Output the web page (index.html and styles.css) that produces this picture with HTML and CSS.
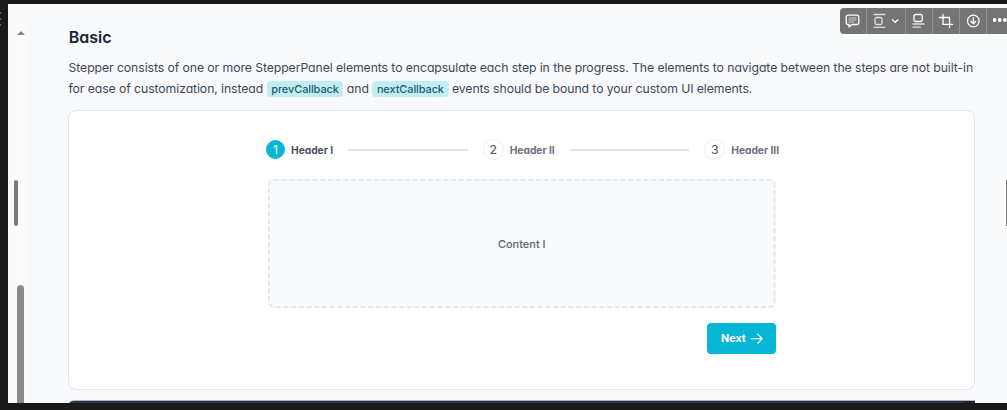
FILE: index.html
```html
<!DOCTYPE html>
<html lang="en">
<head>
<meta charset="utf-8">
<title>Stepper</title>
<link rel="stylesheet" href="styles.css">
</head>
<body>
<div class="page">
  <div class="scrollbar"><span class="scroll-up"></span><span class="scroll-thumb"></span></div>
  <main class="doc">
    <h1 class="title">Basic</h1>
    <p class="intro"><span class="line">Stepper consists of one or more StepperPanel elements to encapsulate each step in the progress. The elements to navigate between the steps are not built-in</span>
    <span class="line">for ease of customization, instead <code class="tag">prevCallback</code> and <code class="tag">nextCallback</code> events should be bound to your custom UI elements.</span></p>
    <section class="card">
      <div class="stepper">
        <nav class="steps">
          <div class="step active"><span class="num">1</span><span class="label">Header I</span></div>
          <span class="rule"></span>
          <div class="step"><span class="num">2</span><span class="label">Header II</span></div>
          <span class="rule"></span>
          <div class="step"><span class="num">3</span><span class="label">Header III</span></div>
        </nav>
        <div class="panel">
          <svg class="dash" width="507.5" height="129" viewBox="0 0 507.5 129"><rect x="1" y="1" width="505.5" height="127" rx="5"/></svg>
          <span class="panel-text">Content I</span>
        </div>
        <div class="actions">
          <button class="next"><span>Next</span>
            <svg width="12" height="12" viewBox="0 0 12 12"><path d="M.7 5.7h10.400M6.700 1.200l4.500 4.500-4.500 4.600"/></svg>
          </button>
        </div>
      </div>
    </section>
    <div class="code-block"></div>
  </main>
</div>
<span class="grip"><i></i><i></i><i></i></span>
<span class="handle left"></span>
<span class="handle right"></span>
<div class="toolbar">
  <span class="tool w27"><svg width="16" height="16" viewBox="0 0 16 16"><path d="M3 2.200h9a1.800 1.800 0 0 1 1.800 1.800v5.700a1.800 1.800 0 0 1-1.800 1.800H7l-3 2.400v-2.400H3a1.800 1.800 0 0 1-1.800-1.800V4A1.800 1.800 0 0 1 3 2.200z"/><path class="thin" d="M4 5h7M4 7h7M4 9h4.500"/></svg></span>
  <span class="tool w39"><svg width="28" height="16" viewBox="0 0 28 16"><path class="soft" d="M2 1.500h11M2 14.300h11"/><rect class="soft" x="3" y="4.500" width="7" height="7" rx="1.500"/><path d="M20.500 6.700l2.700 2.700 2.700-2.700"/></svg></span>
  <span class="tool w27"><svg width="16" height="16" viewBox="0 0 16 16"><rect x="3" y="1.500" width="8.200" height="7" rx="1.400"/><path class="soft" d="M2 11h11M2 14.200h7.500"/></svg></span>
  <span class="tool w27"><svg width="16" height="16" viewBox="0 0 16 16"><path d="M5 1.500v9.800h9.500M1.500 4.500h10v10"/></svg></span>
  <span class="tool w27"><svg width="16" height="16" viewBox="0 0 16 16"><circle cx="8.300" cy="8" r="5.800"/><path d="M8.300 4.700v6M5.900 8.300l2.400 2.400 2.400-2.400"/></svg></span>
  <span class="tool last"><svg width="16" height="16" viewBox="0 0 16 16"><g class="dots"><circle cx="1.500" cy="7" r="1.900"/><circle cx="6.700" cy="7" r="1.900"/><circle cx="11.900" cy="7" r="1.900"/></g></svg></span>
</div>
</body>
</html>
```
FILE: styles.css
```css
* { box-sizing: border-box; }
body {
  margin: 0;
  width: 1007px;
  height: 410px;
  padding: 4px 0 7px 8px;
  overflow: hidden;
  position: relative;
  background: #1a1a1a;
  font-family: Inter, "Liberation Sans", sans-serif;
  font-feature-settings: "cv11", "cv02", "cv03", "cv04";
  color: #4b5563;
}
.page { display: flex; height: 399px; padding-left: 7px; background: #f8fafc; overflow: hidden; }
.scrollbar {
  width: 11px;
  margin-top: 19px;
  padding-top: 8px;
  background: #fcfcfc;
  display: flex;
  flex-direction: column;
  align-items: center;
  justify-content: space-between;
}
.scroll-up { border: 4px solid transparent; border-top: 0; border-bottom: 4px solid #8a8a8a; }
.scroll-thumb { width: 7px; height: 118px; border-radius: 4px 4px 0 0; background: #8b8b8b; }
.doc { width: 907px; margin-left: 42px; }
.title { margin: 23px 0 0; padding-left: .8px; font-size: 16px; line-height: 20px; font-weight: 600; color: #1b2433; }
.intro { margin: 11px 0 0; padding-left: .5px; font-size: 12.25px; letter-spacing: -.084px; line-height: 20.5px; color: #3f4754; }
.line { display: block; white-space: nowrap; }
.tag {
  display: inline-block;
  height: 16px;
  padding: 0 4.700px;
  border-radius: 4px;
  background: #c3edf3;
  color: #16606d;
  font: 500 10.95px/16px Inter, sans-serif;
}
.card {
  height: 280px;
  margin-top: 11px;
  padding: 28px 0 0 197px;
  border: 1px solid #e2e8f0;
  border-radius: 8px;
  background: #fff;
}
.stepper { width: 513px; }
.steps { display: flex; align-items: center; height: 21px; }
.step { display: flex; align-items: center; gap: 6px; white-space: nowrap; }
.num {
  width: 21px;
  height: 21px;
  border: 1px solid #eceef0;
  border-radius: 50%;
  text-align: center;
  font-size: 12.3px;
  line-height: 19px;
}
.label { font-size: 10.3px; font-weight: 700; letter-spacing: -.05px; line-height: 16px; color: #6b7280; }
.active .num { width: 19px; height: 19px; line-height: 17px; border-color: #06b6d4; background: #06b6d4; color: #fff; }
.active .label { color: #4b5563; }
.rule { flex: 1; height: 2px; margin: 0 15px; background: #e3e5e9; }
.panel {
  display: grid;
  place-items: center;
  width: 507.500px;
  height: 129px;
  margin: 19px 0 0 2px;
  background: #f8fafc;
  border-radius: 6px;
}
.panel > * { grid-area: 1 / 1; }
.dash rect { fill: none; stroke: #e0e8f0; stroke-width: 2; stroke-dasharray: 5 2.700; }
.panel-text { font-size: 11px; font-weight: 500; color: #5b6472; }
.actions { display: flex; justify-content: flex-end; width: 509.500px; margin-top: 15px; }
.next {
  display: flex;
  align-items: center;
  gap: 5px;
  width: 68.500px;
  height: 31px;
  padding: 1px 0 0 14px;
  border: 0;
  border-radius: 4px;
  background: #06b6d4;
  color: #fff;
  font: 700 10.800px/16px Inter, sans-serif;
}
.next svg { fill: none; stroke: #fff; stroke-width: 1.2; stroke-linecap: round; stroke-linejoin: round; }
.code-block { height: 20px; margin-top: 10px; border-top: 1px solid #aeb5bf; border-radius: 6px 0 0; background: linear-gradient(90deg, #273449 895px, #262626 895px); }
.grip { position: absolute; left: 0; top: 12px; display: flex; flex-direction: column; gap: 4px; }
.grip i { width: 1px; height: 2px; background: #666; }
.handle { position: absolute; top: 180px; width: 4px; height: 46px; border-radius: 2px; background: #7d7d7d; }
.left { left: 14px; }
.right { left: 1006px; border-radius: 0; }
.toolbar {
  position: absolute;
  left: 840px;
  top: 8px;
  width: 167px;
  height: 26px;
  display: flex;
  overflow: hidden;
  border-radius: 4px 0 0 4px;
  background: #737574;
}
.tool { display: flex; flex: none; align-items: center; justify-content: center; border-right: 1px solid #929493; }
.w27 { width: 27px; }
.w39 { width: 39px; }
.last { width: 27px; border: 0; }
.tool svg { fill: none; stroke: #fff; stroke-width: 1.3; stroke-linecap: round; stroke-linejoin: round; flex: none; }
.tool .soft { stroke: #dededd; }
.tool .thin { stroke: #d5d5d5; stroke-width: .9; }
.tool .dots { fill: #fff; stroke: none; }
```
